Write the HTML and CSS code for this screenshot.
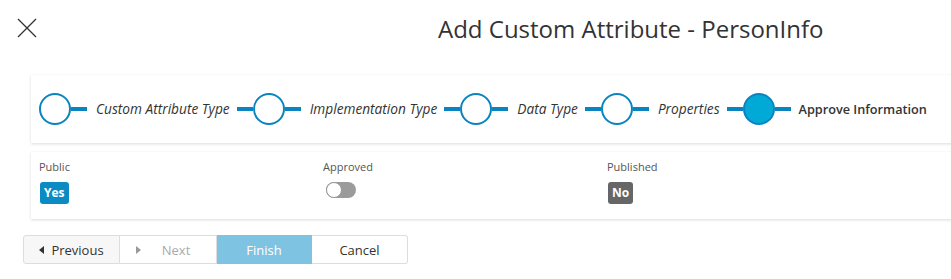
FILE: index.html
```html
<!DOCTYPE html>
<html lang="en">
<head>
  <meta charset="UTF-8" />
  <title>Add Custom Attribute - PersonInfo</title>
  <link rel="stylesheet" href="styles.css">
</head>
<body>
  <div class="top">
    <a class="close" href="#">
      <svg width="20" height="20" viewBox="0 0 20 20"><path d="M1 1 L19 19 M19 1 L1 19" stroke="#333" stroke-width="1.3" fill="none"/></svg>
    </a>
    <h1 class="title">Add Custom Attribute - PersonInfo</h1>
  </div>

  <div class="card steps">
    <div class="step">
      <span class="circle"></span><span class="line"></span>
      <span class="label">Custom Attribute Type</span>
    </div>
    <div class="step">
      <span class="line"></span><span class="circle"></span><span class="line"></span>
      <span class="label">Implementation Type</span>
    </div>
    <div class="step">
      <span class="line"></span><span class="circle"></span><span class="line"></span>
      <span class="label">Data Type</span>
    </div>
    <div class="step">
      <span class="line"></span><span class="circle"></span><span class="line"></span>
      <span class="label">Properties</span>
    </div>
    <div class="step active">
      <span class="line"></span><span class="circle"></span><span class="line"></span>
      <span class="label">Approve Information</span>
    </div>
  </div>

  <div class="card info">
    <div class="field">
      <div class="field-label">Public</div>
      <span class="badge yes">Yes</span>
    </div>
    <div class="field">
      <div class="field-label">Approved</div>
      <span class="toggle"><span class="knob"></span></span>
    </div>
    <div class="field">
      <div class="field-label">Published</div>
      <span class="badge no">No</span>
    </div>
  </div>

  <div class="buttons">
    <button class="btn prev"><span class="tri left"></span>Previous</button>
    <button class="btn next"><span class="tri right"></span>Next</button>
    <button class="btn finish">Finish</button>
    <button class="btn cancel">Cancel</button>
  </div>
</body>
</html>
```

FILE: styles.css
```css
body {
  font-family: 'Open Sans', sans-serif;
  margin: 0;
  padding: 0;
  color: #333;
  background: #fff;
  overflow: hidden;
}

.top {
  display: flex;
  align-items: center;
  height: 56px;
}

.close {
  display: block;
  margin-left: 17px;
  width: 20px;
  height: 20px;
  margin-top: -1px;
}

.close svg {
  display: block;
}

.title {
  margin: 0 0 0 401px;
  font-size: 24px;
  font-weight: 400;
  color: #333;
}

.card {
  margin-left: 31px;
  margin-right: -10px;
  background: #fff;
  box-shadow: 0 1px 3px rgba(0, 0, 0, 0.14);
}

.steps {
  margin-top: 19px;
  height: 68px;
  display: flex;
  align-items: center;
  padding-left: 8px;
}

.step {
  display: flex;
  align-items: center;
}

.circle {
  width: 28px;
  height: 28px;
  border: 2px solid #0a84c1;
  border-radius: 50%;
  background: #fff;
}

.step.active .circle {
  background: #00a9d6;
}

.line {
  width: 16px;
  height: 4px;
  background: #0a84c1;
}

.label {
  font-size: 13.7px;
  font-style: italic;
  color: #333;
  margin: 0 7px 0 9px;
  padding-bottom: 1px;
}

.step.active .label {
  font-size: 12.7px;
  font-style: normal;
  font-weight: 600;
  margin-left: 8px;
}

.info {
  margin-top: 9px;
  height: 67px;
  display: grid;
  grid-template-columns: 284px 284px 284px;
  padding-left: 8px;
  align-content: start;
  padding-top: 7px;
  box-sizing: border-box;
}

.field-label {
  font-size: 11px;
  color: #555;
  line-height: 15px;
  margin-bottom: 6px;
}

.badge {
  display: inline-block;
  height: 22px;
  line-height: 22px;
  padding: 0 4px;
  border-radius: 3px;
  color: #fff;
  font-size: 12px;
  font-weight: 700;
  margin-left: 1px;
}

.badge.yes {
  background: #0a8bc4;
}

.badge.no {
  background: #666;
}

.toggle {
  display: inline-block;
  position: relative;
  width: 30px;
  height: 16px;
  border-radius: 8px;
  background: #9b9b9b;
  margin: 2px 0 0 3px;
}

.toggle .knob {
  position: absolute;
  left: 0;
  top: 0;
  width: 14px;
  height: 14px;
  border: 1px solid #999;
  border-radius: 50%;
  background: #fff;
}

.buttons {
  display: flex;
  margin: 16px 0 0 23px;
}

.btn {
  width: 96px;
  height: 29px;
  font-family: 'Open Sans', sans-serif;
  font-size: 13px;
  border: 1px solid #ddd;
  border-left: none;
  background: #fff;
  color: #333;
  padding: 0;
  display: flex;
  align-items: center;
  justify-content: center;
}

.btn.prev {
  border-left: 1px solid #ddd;
  border-radius: 3px 0 0 3px;
  background: #f7f7f7;
  width: 97px;
}

.btn.next {
  color: #aaa;
  width: 97px;
  padding-right: 10px;
}

.btn.finish {
  background: #7fc3e2;
  border-color: #7fc3e2;
  color: #fff;
  width: 95px;
}

.btn.cancel {
  border-radius: 0 3px 3px 0;
}

.tri {
  width: 0;
  height: 0;
  border-top: 4px solid transparent;
  border-bottom: 4px solid transparent;
}

.tri.left {
  border-right: 5px solid #333;
  margin-right: 7px;
}

.tri.right {
  border-left: 5px solid #999;
  margin-right: 21px;
}
```
